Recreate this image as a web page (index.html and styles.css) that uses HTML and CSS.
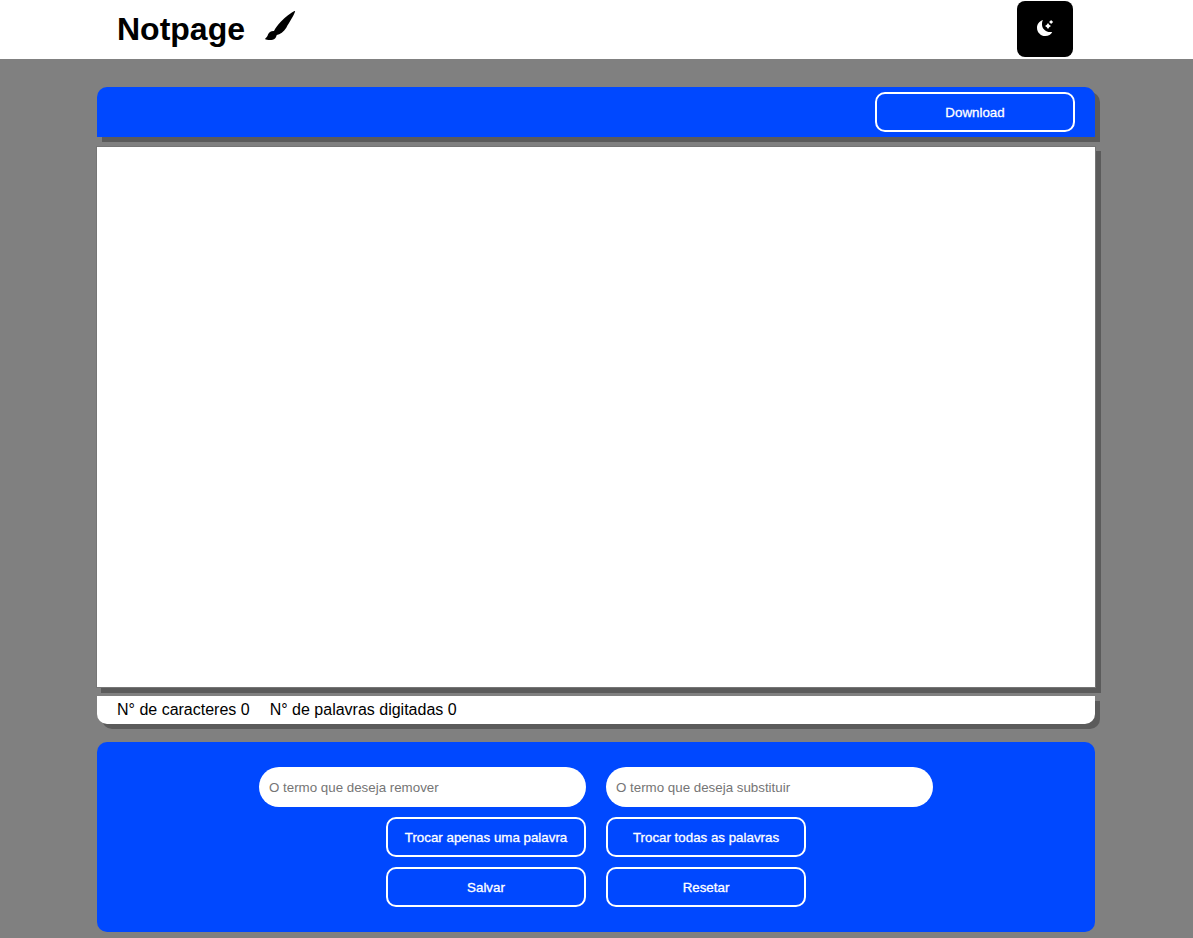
FILE: index.html
```html
<!DOCTYPE html>
<html lang="pt-BR">
<head>
<meta charset="UTF-8">
<title>Notpage</title>
<link rel="stylesheet" href="styles.css">
</head>
<body>
<header class="header">
  <div class="brand">
    <h1 class="brand-name">Notpage</h1>
    <svg class="brand-icon" viewBox="0 0 40 40" aria-hidden="true">
      <path d="M34.500 6C31 7.600 25.200 12.200 21 16.500C17.800 19.900 15.300 23 14 25.900C11 25.700 8.700 27.300 8 29.500C7.400 31.600 6.300 32.800 4.900 34C7.400 35.400 12.800 35.500 15 33.500C16 32.500 16.400 31.300 16.700 30C20 29.300 23.800 26.800 26.300 22.700C29.300 17.500 33.900 10.500 35.100 6.600C35.200 6.100 35 5.900 34.500 6Z"/>
    </svg>
  </div>
  <button class="theme" type="button" aria-label="Tema">
    <svg class="theme-icon" viewBox="0 0 40 40" aria-hidden="true">
      <path d="M18 12C14.300 13 12 16.200 12 19.700C12 24.300 15.700 28 20.300 28C23.500 28 26.100 26.400 27.200 23.900C21.800 25 17 21.500 17 16.300C17 14.700 17.200 13.300 18 12Z"/>
      <path d="M23 15L24.200 16.800L26 18L24.200 19.200L23 21L21.800 19.200L20 18L21.800 16.800Z"/>
      <path d="M26.100 11.900L27 13.100L28.200 14L27 14.900L26.100 16.100L25.200 14.900L24 14L25.200 13.100Z"/>
    </svg>
  </button>
</header>
<main class="main">
  <div class="toolbar"><button class="btn" type="button">Download</button></div>
  <textarea class="editor" aria-label="Texto"></textarea>
  <div class="stats">
    <p>N° de caracteres 0</p>
    <p>N° de palavras digitadas 0</p>
  </div>
  <section class="panel">
    <div class="row">
      <input class="field" type="text" placeholder="O termo que deseja remover">
      <input class="field" type="text" placeholder="O termo que deseja substituir">
    </div>
    <div class="row">
      <button class="btn" type="button">Trocar apenas uma palavra</button>
      <button class="btn" type="button">Trocar todas as palavras</button>
    </div>
    <div class="row">
      <button class="btn" type="button">Salvar</button>
      <button class="btn" type="button">Resetar</button>
    </div>
  </section>
</main>
</body>
</html>
```
FILE: styles.css
```css
* {
  margin: 0;
  padding: 0;
  box-sizing: border-box;
  font-family: "Liberation Sans", Arial, sans-serif;
}

body {
  background: #808080;
  color: #000;
}

.header {
  display: flex;
  justify-content: space-between;
  align-items: flex-start;
  height: 59px;
  padding: 1px 120px 0 117px;
  background: #fff;
}

.brand {
  display: flex;
  gap: 15px;
}

.brand-name {
  padding-top: 10px;
  font-size: 32px;
  line-height: 36px;
}

.brand-icon {
  width: 40px;
  height: 40px;
  margin-top: 4px;
}

.theme {
  display: flex;
  justify-content: center;
  width: 56px;
  height: 56px;
  padding-top: 7px;
  border: 0;
  border-radius: 8px;
  background: #000;
}

.theme-icon {
  width: 40px;
  height: 40px;
  fill: #fff;
}

.main {
  width: 998px;
  margin: 28px 0 0 97px;
}

.toolbar {
  display: flex;
  justify-content: flex-end;
  align-items: center;
  height: 50px;
  padding-right: 20px;
  border-radius: 10px 10px 0 0;
  background: #0048ff;
  box-shadow: 5px 5px #5b5b5b;
}

.editor {
  display: block;
  width: 1000px;
  height: 542px;
  margin: 9px -1px 8px;
  padding: 20px;
  border: 1px solid #767676;
  resize: none;
  background: #fff;
  box-shadow: 5px 5px #5b5b5b;
}

.stats {
  display: flex;
  gap: 20px;
  height: 28px;
  padding: 0 20px;
  border-radius: 0 0 10px 10px;
  background: #fff;
  box-shadow: 5px 5px #5b5b5b;
  font-size: 16px;
  line-height: 27px;
}

.panel {
  display: flex;
  flex-direction: column;
  gap: 10px;
  height: 190px;
  margin-top: 18px;
  padding-top: 25px;
  border-radius: 10px;
  background: #0048ff;
}

.row {
  display: flex;
  justify-content: center;
  gap: 20px;
}

.field {
  width: 327px;
  height: 40px;
  padding: 0 10px;
  border: 0;
  border-radius: 20px;
  font-size: 13.333px;
}

.field::placeholder {
  color: #757575;
}

.btn {
  width: 200px;
  height: 40px;
  border: 2px solid #fff;
  border-radius: 10px;
  background: transparent;
  color: #fff;
  font-size: 13.333px;
  font-weight: 500;
  -webkit-text-stroke: 0.3px #fff;
}
```
